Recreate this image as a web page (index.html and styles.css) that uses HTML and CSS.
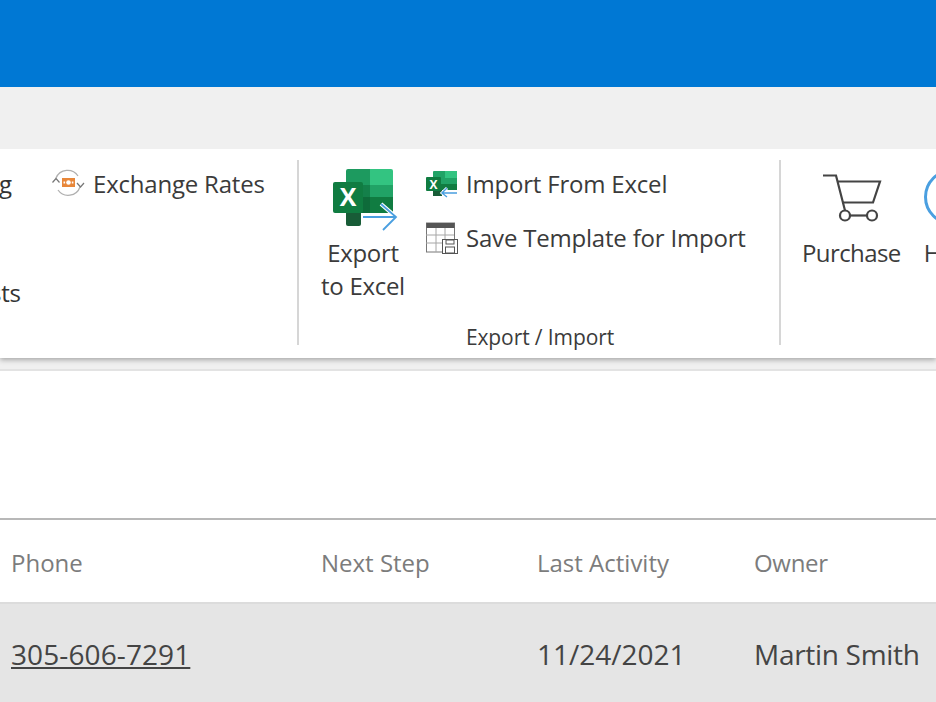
FILE: index.html
```
<!DOCTYPE html>
<html lang="en">
<head>
<meta charset="utf-8">
<title>Ribbon</title>
<link rel="stylesheet" href="styles.css">
</head>
<body>
<div class="topbar"></div>
<div class="tabbar"></div>
<div class="ribbon">
  <div class="card">
    <section class="group group-first">
      <div class="stack">
        <div class="cut">g</div>
        <div class="cut cut-bottom">sts</div>
      </div>
      <div class="small-item rates">
        <svg class="ic-rates" viewBox="0 0 34 28"><path d="M5 9A12.500 12.500 0 0 1 27 7M29 18A12.500 12.500 0 0 1 7 21" fill="none" stroke="#b0b0b0" stroke-width="1.300"/><path d="M1.500 13.500L5 9.500l3.500 4M26 14l3.500 4 3.500-4" fill="none" stroke="#777" stroke-width="1.200"/><rect x="11" y="9" width="13" height="9" fill="#e8873a"/><circle cx="17.500" cy="13.500" r="2.300" fill="#fff"/><rect x="12.500" y="12.500" width="1.600" height="2" fill="#fff"/><rect x="20.800" y="12.500" width="1.600" height="2" fill="#fff"/></svg>
        <span>Exchange Rates</span>
      </div>
    </section>
    <section class="group group-export">
      <div class="group-body">
        <div class="large-item export">
          <svg class="ic-export" viewBox="0 0 66 64"><path d="M14 3a2 2 0 0 1 2-2h22v16H14z" fill="#1d9a5f"/><path d="M38 1h21a2 2 0 0 1 2 2v14H38z" fill="#33c481"/><rect x="14" y="17" width="24" height="12" fill="#14804a"/><rect x="38" y="17" width="23" height="12" fill="#21a366"/><rect x="14" y="29" width="24" height="16" fill="#0e6b3a"/><rect x="38" y="29" width="23" height="16" fill="#107c41"/><path d="M14 45h15v11a2 2 0 0 1-2 2H16a2 2 0 0 1-2-2z" fill="#185c37"/><rect x="1" y="14" width="30" height="31" rx="2" fill="#107c41"/><text class="xl" x="16" y="38">X</text><path d="M31 49h33M49 36l15 13-13 13" fill="none" stroke="#fff" stroke-width="4"/><path d="M31 49h33M49 36l15 13-13 13" fill="none" stroke="#4a9fe0" stroke-width="1.800"/></svg>
          <span class="export-text">Export<br>to Excel</span>
        </div>
        <div class="small-list">
          <div class="small-item">
            <svg class="ic-import" viewBox="0 0 32 28"><rect x="7" y="1" width="24" height="18" rx="1" fill="#21a366"/><rect x="19" y="1" width="12" height="7" fill="#33c481"/><rect x="7" y="14" width="24" height="6" fill="#107c41"/><rect x="7" y="20" width="9" height="6" fill="#185c37"/><rect x="0" y="7" width="15" height="14" rx="1" fill="#107c41"/><text class="xs" x="7.500" y="18.500">X</text><path d="M31 23H16M21 18l-5 5 5 4" fill="none" stroke="#fff" stroke-width="3"/><path d="M31 23H16M21 18l-5 5 5 4" fill="none" stroke="#4a9fe0" stroke-width="1.400"/></svg>
            <span>Import From Excel</span>
          </div>
          <div class="small-item">
            <svg class="ic-template" viewBox="0 0 32 32"><rect x="0.500" y="1" width="28" height="29" fill="#fff" stroke="#777"/><rect x="0.500" y="1" width="28" height="5" fill="#555"/><path d="M0 13h28M0 21h28M10 6v24M19 6v24" stroke="#a6a6a6" fill="none"/><rect x="16.500" y="17.500" width="15" height="14" fill="#fff" stroke="#555"/><rect x="20" y="18" width="8" height="4" fill="#fff" stroke="#555"/><rect x="19.500" y="25" width="9" height="6" fill="#fff" stroke="#555"/></svg>
            <span>Save Template for Import</span>
          </div>
        </div>
      </div>
      <div class="group-label">Export / Import</div>
    </section>
    <section class="group group-last">
      <div class="large-item purchase">
        <svg class="ic-cart" viewBox="0 0 60 50"><path d="M1 1.500h13l9 35" fill="none" stroke="#444" stroke-width="2.200"/><path d="M15 7.500h43l-7 21H20" fill="none" stroke="#444" stroke-width="2.200"/><circle cx="23" cy="41.500" r="5" fill="none" stroke="#444" stroke-width="2.200"/><circle cx="50" cy="41.500" r="5" fill="none" stroke="#444" stroke-width="2.200"/><path d="M28 41.500h17" stroke="#444" stroke-width="2.200"/></svg>
        <span class="purchase-text">Purchase</span>
      </div>
      <div class="large-item help">
        <span class="help-ring"></span>
        <span>Help</span>
      </div>
    </section>
  </div>
</div>
<div class="spacer"></div>
<div class="thead">
  <div class="col col-phone">Phone</div>
  <div class="col col-next">Next Step</div>
  <div class="col col-activity">Last Activity</div>
  <div class="col col-owner">Owner</div>
</div>
<div class="trow">
  <div class="col col-phone"><a href="#">305-606-7291</a></div>
  <div class="col col-next"></div>
  <div class="col col-activity">11/24/2021</div>
  <div class="col col-owner">Martin Smith</div>
</div>
</body>
</html>
```
FILE: styles.css
```
* { box-sizing: border-box; }
html, body { margin: 0; height: 702px; overflow: hidden; }
body {
  background: #fff;
  font-family: "Open Sans", "Noto Sans", "Liberation Sans", sans-serif;
  color: #333;
  width: 936px;
}
.topbar { height: 87px; background: #0078d4; }
.tabbar { height: 62px; background: #f0f0f0; }
.ribbon {
  height: 222px;
  background: #f0f0f0;
  border-bottom: 2px solid #e3e3e3;
  overflow: hidden;
}
.card {
  height: 209px;
  display: flex;
  background: #fff;
  box-shadow: 0 2px 5px rgba(0,0,0,.3);
}
.group { flex: none; position: relative; }
.group-first {
  width: 300px;
  display: flex;
  padding-top: 19px;
}
.group-first::after, .group-export::after {
  content: "";
  position: absolute;
  top: 11px;
  height: 185px;
  width: 2px;
  background: #d6d6d6;
}
.group-first::after { right: 1px; }
.group-export::after { right: 1px; }
.stack { width: 51px; font-size: 24px; letter-spacing: -.2px; }
.cut { line-height: 32px; margin-left: -1px; }
.cut-bottom { margin-left: -10px; margin-top: 77px; }
.small-item { display: flex; align-items: center; font-size: 24px; letter-spacing: -.2px; line-height: 32px; white-space: nowrap; color: #3b3b3b; }
.rates { height: 32px; align-self: flex-start; gap: 8px; }
.ic-rates { width: 34px; height: 28px; flex: none; margin-top: -2px; }
.group-export {
  width: 482px;
  padding-top: 11px;
  display: flex;
  flex-direction: column;
}
.group-body { display: flex; flex: 1; padding-left: 19px; }
.large-item {
  display: flex;
  flex-direction: column;
  align-items: center;
  font-size: 24px;
  letter-spacing: -.2px;
  line-height: 33px;
  text-align: center;
  color: #3b3b3b;
}
.export { width: 88px; }
.ic-export { width: 66px; height: 64px; margin-top: 8px; margin-bottom: 4px; margin-left: 4px; }
.export-text { letter-spacing: -.3px; }
.small-list { padding-left: 19px; padding-top: 8px; display: flex; flex-direction: column; gap: 22px; }
.small-list .small-item { gap: 8px; }
.ic-import { width: 32px; height: 28px; flex: none; margin-top: -1px; }
.ic-template { width: 32px; height: 32px; flex: none; }
.group-label { font-size: 21px; letter-spacing: -.1px; text-align: center; line-height: 28px; height: 35px; padding-right: 2px; color: #3b3b3b; }
.group-last { display: flex; padding-left: 20px; gap: 23px; flex: 1; min-width: 0; }
.purchase { width: 100px; }
.purchase-text { letter-spacing: -.6px; }
.ic-cart { width: 60px; height: 50px; margin-top: 25px; margin-bottom: 12px; margin-left: 2px; }
.help { align-items: flex-start; }
.help-ring {
  width: 56px;
  height: 56px;
  border: 3px solid #4a9fe0;
  border-radius: 50%;
  margin: 20px 0 11px;
}
.spacer { height: 147px; }
.thead, .trow { display: flex; padding-left: 11px; align-items: center; }
.thead {
  height: 86px;
  border-top: 2px solid #b8b8b8;
  border-bottom: 2px solid #dcdcdc;
  color: #7c7c7c;
  font-size: 24px;
  padding-top: 2px;
}
.trow {
  height: 98px;
  background: #e5e5e5;
  font-size: 28px;
  color: #444;
  padding-top: 2px;
}
.col { flex: none; white-space: nowrap; }
.col-phone { width: 310px; }
.col-next { width: 216px; }
.col-activity { width: 217px; }
.col-owner { letter-spacing: -.3px; }
a { color: #444; letter-spacing: .1px; }
.xl { font: 700 25px "Open Sans", sans-serif; fill: #fff; text-anchor: middle; }
.xs { font: 700 12px "Open Sans", sans-serif; fill: #fff; text-anchor: middle; }
```
